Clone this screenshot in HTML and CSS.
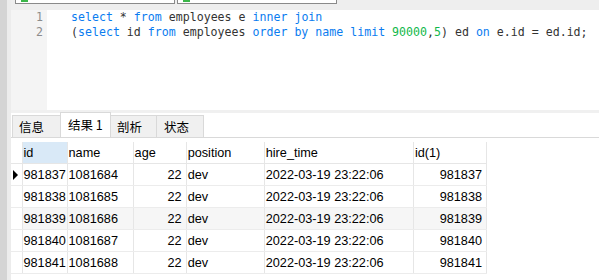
FILE: index.html
```html
<!DOCTYPE html>
<html>
<head>
  <link rel="stylesheet" href="styles.css">
</head>
<body>
  <div class="side"></div>
  <div class="main">
    <div class="toolbar">
      <div class="tb-box first"><span class="tb-mark"></span></div>
      <div class="tb-box second"><span class="tb-mark"></span></div>
    </div>

    <div class="editor">
      <div class="gutter">
        <div>1</div>
        <div>2</div>
      </div>
      <div class="code">
        <div class="line"><span class="kw">select</span> * <span class="kw">from</span> employees e <span class="kw">inner join</span></div>
        <div class="line">(<span class="kw">select</span> id <span class="kw">from</span> employees <span class="kw">order by name limit</span> <span class="num">90000</span>,<span class="num">5</span>) ed <span class="kw">on</span> e.id = ed.id;</div>
      </div>
    </div>

    <div class="splitter"></div>

    <div class="tabs">
      <div class="tab w1">信息</div>
      <div class="tab active">结果 1</div>
      <div class="tab w2">剖析</div>
      <div class="tab w3">状态</div>
    </div>

    <table class="grid">
      <colgroup>
        <col style="width:11px">
        <col style="width:45px">
        <col style="width:66px">
        <col style="width:53px">
        <col style="width:78px">
        <col style="width:149px">
        <col style="width:73px">
      </colgroup>
      <tr class="head">
        <th class="ind"></th>
        <th class="sel">id</th>
        <th>name</th>
        <th>age</th>
        <th>position</th>
        <th>hire_time</th>
        <th>id(1)</th>
      </tr>
      <tr>
        <td class="ind"><span class="arrow"></span></td>
        <td>981837</td><td>1081684</td><td class="r">22</td><td>dev</td><td>2022-03-19 23:22:06</td><td class="r">981837</td>
      </tr>
      <tr>
        <td class="ind"></td>
        <td>981838</td><td>1081685</td><td class="r">22</td><td>dev</td><td>2022-03-19 23:22:06</td><td class="r">981838</td>
      </tr>
      <tr class="alt">
        <td class="ind"></td>
        <td>981839</td><td>1081686</td><td class="r">22</td><td>dev</td><td>2022-03-19 23:22:06</td><td class="r">981839</td>
      </tr>
      <tr>
        <td class="ind"></td>
        <td>981840</td><td>1081687</td><td class="r">22</td><td>dev</td><td>2022-03-19 23:22:06</td><td class="r">981840</td>
      </tr>
      <tr>
        <td class="ind"></td>
        <td>981841</td><td>1081688</td><td class="r">22</td><td>dev</td><td>2022-03-19 23:22:06</td><td class="r">981841</td>
      </tr>
    </table>
  </div>
</body>
</html>
```

FILE: styles.css
```css
body {
  margin: 0;
  width: 599px;
  height: 280px;
  overflow: hidden;
  display: flex;
  background: #fff;
  font-family: "Liberation Sans", "Noto Sans CJK SC", sans-serif;
}

.side {
  width: 7px;
  background: #d4d4d4;
  border-right: 4px solid #ececec;
}

.main {
  flex: 1;
  display: flex;
  flex-direction: column;
}

.toolbar {
  height: 10px;
  background: #eeeeee;
  display: flex;
}

.tb-box {
  height: 3px;
  background: #fff;
  border: 1px solid #8a8a8a;
  border-top: none;
  position: relative;
}

.tb-box.first {
  margin-left: 4px;
  width: 158px;
}

.tb-box.second {
  margin-left: 2px;
  width: 158px;
}

.tb-mark {
  position: absolute;
  left: 5px;
  top: 0;
  width: 7px;
  height: 2px;
  background: #3cb64a;
}

.editor {
  height: 100px;
  display: flex;
  font-family: "DejaVu Sans Mono", monospace;
  font-size: 11.6px;
  line-height: 15px;
}

.gutter {
  width: 32px;
  padding-right: 4px;
  background: #f4f4f4;
  color: #8c8c8c;
  text-align: right;
}

.code {
  padding-left: 24px;
  color: #333;
}

.code .line {
  white-space: pre;
}

.kw {
  color: #0a7cf0;
}

.num {
  color: #11b84a;
}

.splitter {
  height: 3px;
  background: #f0f0f0;
}

.tabs {
  height: 24px;
  display: flex;
  align-items: flex-end;
  border-bottom: 1px solid #d9d9d9;
  padding-left: 1px;
}

.tab {
  height: 21px;
  line-height: 21px;
  background: #f0f0f0;
  border: 1px solid #d9d9d9;
  border-bottom: none;
  font-family: "Noto Sans CJK SC", sans-serif;
  font-size: 12.5px;
  color: #000;
  padding-left: 6px;
  box-sizing: content-box;
}

.tab.w1 {
  width: 41px;
}

.tab.active {
  height: 24px;
  line-height: 24px;
  background: #fff;
  width: 42px;
  margin-left: -1px;
  padding-left: 7px;
}

.tab.w2 {
  width: 39px;
  margin-left: -1px;
}

.tab.w3 {
  width: 39px;
  margin-left: -1px;
  padding-left: 7px;
}

.grid {
  margin-top: 4px;
  border-collapse: collapse;
  table-layout: fixed;
  width: 476px;
  font-size: 12.7px;
  color: #000;
}

.grid th,
.grid td {
  height: 21px;
  padding: 0 0 0 1px;
  border-right: 1px solid #e6e6e6;
  border-bottom: 1px solid #ececec;
  text-align: left;
  font-weight: normal;
  white-space: nowrap;
  overflow: hidden;
}

.grid td.r {
  text-align: right;
  padding-right: 4px;
}

.grid .head th {
  border-bottom: 1px solid #e6e6e6;
}

.grid th.sel {
  background: #d9e9f7;
}

.grid .ind {
  padding: 0;
}

.grid tr.alt td {
  background: #f6f6f6;
}

.grid tr.alt td.ind {
  background: #fff;
}

.arrow {
  display: block;
  margin-left: 2px;
  width: 0;
  height: 0;
  border-top: 5px solid transparent;
  border-bottom: 5px solid transparent;
  border-left: 5px solid #000;
}
```
